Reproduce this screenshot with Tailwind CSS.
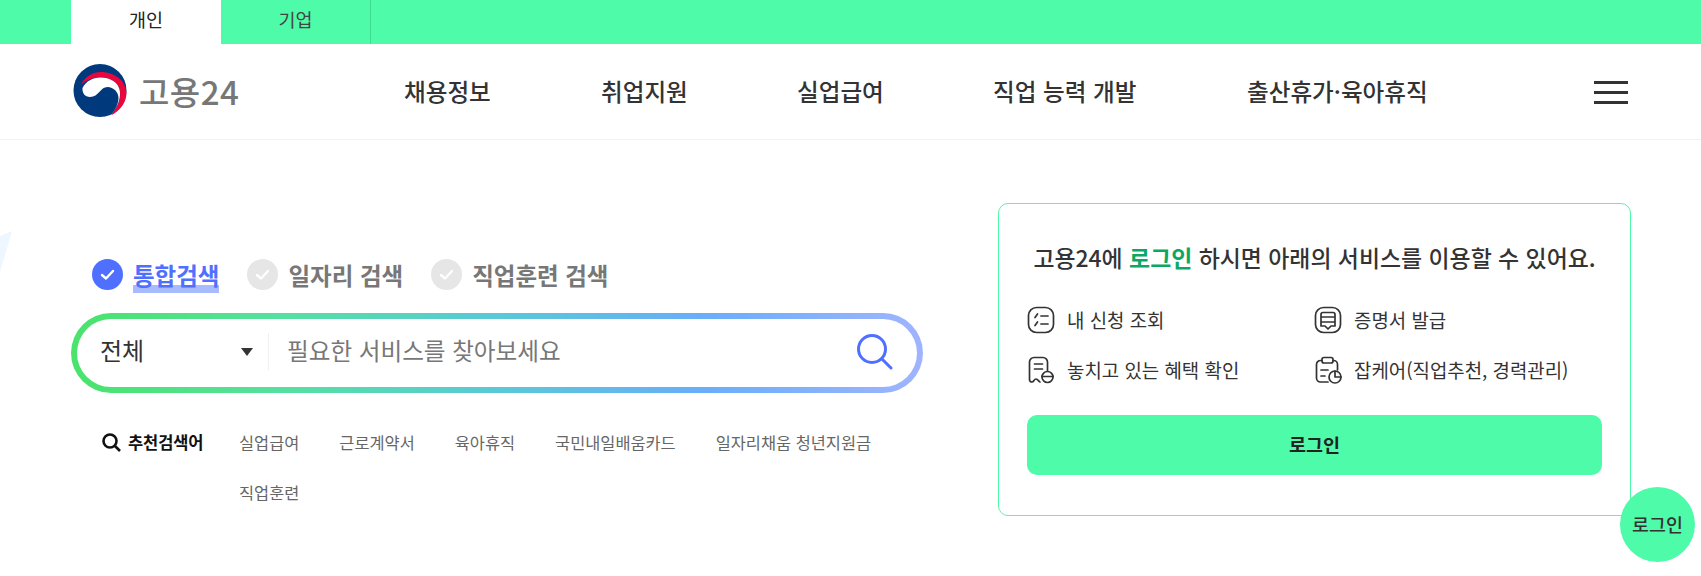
<!DOCTYPE html>
<html lang="ko">
<head>
  <meta charset="UTF-8" />
  <title>고용24</title>
  <script src="https://cdn.jsdelivr.net/npm/@tailwindcss/browser@4"></script>
</head>
<body class="relative h-[576px] overflow-hidden bg-white font-['Noto_Sans_CJK_KR','Noto_Sans',sans-serif] text-[#333]">
  <!-- top tabs -->
  <div class="flex h-[44px] bg-[#4dfba8] pl-[71px]">
    <a class="flex w-[150px] items-center justify-center bg-white pb-[4px] text-[18.5px] text-[#222]">개인</a>
    <a class="flex w-[150px] items-center justify-center border-r border-[#3fdc92] pb-[4px] text-[18.5px] text-[#444]">기업</a>
  </div>

  <!-- header -->
  <header class="flex h-[96px] items-center border-b border-[#f2f2f2] pl-[73px]">
    <div class="flex w-[331px] items-center gap-[12px]">
      <svg width="54" height="54" viewBox="0 0 54 54" class="mt-[-2px]">
        <circle cx="27" cy="26.5" r="26.5" fill="#003a7d" />
        <path d="M8 21C12 12 20 8 28 8 42 8 53 17 53.5 29 53.5 38 47 47 38 51.5 44 44 48 36 47 28 46 18 37 13.5 27 13.5 20 13.5 13 16 8 21z" fill="#e8063c" />
        <path d="M9.5 24C13 17 20 13.5 27 13.5 37 13.5 46 18 47 28 47.5 36 44 44 38 51 42 46 45.5 40 45.5 34 45.5 28 40.5 23 34.5 23 27 23 26 33 17 33 12 33 9 29 9.5 24z" fill="#fff" />
      </svg>
      <span class="text-[33px] font-medium leading-none tracking-[0.5px] text-[#777]">고용24</span>
    </div>
    <nav class="flex items-center text-[23.6px] font-medium text-[#333]">
      <a class="w-[197px]">채용정보</a>
      <a class="w-[196px]">취업지원</a>
      <a class="w-[196px]">실업급여</a>
      <a class="w-[254px]">직업 능력 개발</a>
      <a>출산휴가·육아휴직</a>
    </nav>
    <button class="absolute left-[1594px] top-[81px] flex w-[34px] flex-col gap-[7px]">
      <span class="h-[3px] bg-[#333]"></span>
      <span class="h-[3px] bg-[#333]"></span>
      <span class="h-[3px] bg-[#333]"></span>
    </button>
  </header>

  <!-- faint shape at left edge -->
  <svg class="absolute left-0 top-[228px]" width="14" height="44" viewBox="0 0 14 44"><path d="M12 3L0 8v36z" fill="#eef6ff" /></svg>

  <main class="flex items-start pl-[71px] pt-[63px]">
    <!-- search -->
    <section class="w-[927px] pt-[56px]">
      <div class="flex h-[31px] items-center pl-[21px] text-[23.5px] font-bold text-[#777]">
        <span class="flex h-[31px] w-[31px] items-center justify-center rounded-full bg-[#4f6fff]">
          <svg width="17" height="17" viewBox="0 0 17 17" fill="none" stroke="#fff" stroke-width="2.4" stroke-linecap="round" stroke-linejoin="round"><path d="M3 9l4 3.5L14 5" /></svg>
        </span>
        <span class="ml-[10px] mt-[3px] h-[34px] bg-[linear-gradient(transparent_76%,#a9bbff_76%)] leading-[33px] text-[#4f6fff]">통합검색</span>
        <span class="ml-[28px] flex h-[31px] w-[31px] items-center justify-center rounded-full bg-[#e6e6e6]">
          <svg width="17" height="17" viewBox="0 0 17 17" fill="none" stroke="#fff" stroke-width="2.4" stroke-linecap="round" stroke-linejoin="round"><path d="M3 9l4 3.5L14 5" /></svg>
        </span>
        <span class="ml-[10px] mt-[3px] h-[34px] leading-[33px]">일자리 검색</span>
        <span class="ml-[28px] flex h-[31px] w-[31px] items-center justify-center rounded-full bg-[#e6e6e6]">
          <svg width="17" height="17" viewBox="0 0 17 17" fill="none" stroke="#fff" stroke-width="2.4" stroke-linecap="round" stroke-linejoin="round"><path d="M3 9l4 3.5L14 5" /></svg>
        </span>
        <span class="ml-[10px] mt-[3px] h-[34px] leading-[33px]">직업훈련 검색</span>
      </div>

      <div class="mt-[23px] h-[80px] w-[852px] rounded-full bg-[linear-gradient(90deg,#4ae36c_0%,#55e0a0_25%,#5ac8d8_50%,#68aef8_74%,#a0b4ff_100%)] p-[6px]">
        <div class="flex h-full items-center rounded-full bg-white">
          <div class="mb-[3px] flex h-[37px] w-[192px] items-center border-r border-[#f0f0f0] pl-[23px]">
            <span class="mb-[3px] w-[141px] text-[24px] leading-none text-[#333]">전체</span>
            <svg width="12" height="8" viewBox="0 0 12 8"><path d="M0 0h12L6 8z" fill="#333" /></svg>
          </div>
          <span class="mb-[4px] ml-[18px] text-[23.6px] text-[#777]">필요한 서비스를 찾아보세요</span>
          <svg class="mb-[2px] ml-auto mr-[23px]" width="38" height="36" viewBox="0 0 38 36" fill="none" stroke="#4f6fff" stroke-width="3"><circle cx="16" cy="15" r="13.5" /><path d="M26 25l9 9" stroke-linecap="round" /></svg>
        </div>
      </div>

      <div class="mt-[33px] flex pl-[31px]">
        <div class="flex h-[32px] w-[137px] shrink-0 items-center gap-[7px]">
          <svg width="19" height="19" viewBox="0 0 19 19" fill="none" stroke="#111" stroke-width="2.6"><circle cx="8" cy="8" r="6.5" /><path d="M13 13l5 5" /></svg>
          <span class="text-[16.5px] font-bold tracking-[-0.1px] text-[#111]">추천검색어</span>
        </div>
        <div class="flex w-[660px] flex-wrap gap-x-[40px] gap-y-[18px] text-[16.4px] leading-[32px] text-[#666]">
          <a>실업급여</a>
          <a>근로계약서</a>
          <a>육아휴직</a>
          <a>국민내일배움카드</a>
          <a>일자리채움 청년지원금</a>
          <a>직업훈련</a>
        </div>
      </div>
    </section>

    <!-- login card -->
    <aside class="h-[313px] w-[633px] rounded-[10px] border border-[#4dfba8] px-[28px] pt-[37px]">
      <p class="whitespace-nowrap text-center text-[22.9px] font-medium leading-[32px] text-[#333]">고용24에 <b class="font-bold text-[#0ba864]">로그인</b> 하시면 아래의 서비스를 이용할 수 있어요.</p>
      <ul class="mt-[33px] grid grid-cols-[287px_1fr] gap-y-[22px] text-[18.9px] text-[#333]">
        <li class="flex h-[28px] items-center gap-[12px]">
          <svg width="28" height="28" viewBox="0 0 28 28" fill="none" stroke="#333" stroke-width="1.7" stroke-linecap="round" stroke-linejoin="round"><rect x="1.5" y="1.5" width="25" height="25" rx="8" /><path d="M8 11.5L10.5 8M8 19.5L10.5 16M14 10h7M14 18h7" /></svg>
          내 신청 조회
        </li>
        <li class="flex h-[28px] items-center gap-[12px]">
          <svg width="28" height="28" viewBox="0 0 28 28" fill="none" stroke="#333" stroke-width="1.7" stroke-linecap="round" stroke-linejoin="round"><rect x="1.5" y="1.5" width="25" height="25" rx="8" /><path d="M7 20V8.5a2 2 0 0 1 2-2h10a2 2 0 0 1 2 2V20h-4l-3 3-3-3zM7 11h14M7 16h14" /></svg>
          증명서 발급
        </li>
        <li class="flex h-[28px] items-center gap-[12px]">
          <svg width="28" height="28" viewBox="0 0 28 28" fill="none" stroke="#333" stroke-width="1.7" stroke-linecap="round" stroke-linejoin="round"><path d="M13 26c-1 0-2-3-4-3s-2 3-4 3c-1.5 0-2.5-1-2.5-2.5V6A4.5 4.5 0 0 1 7 1.5h9A4.5 4.5 0 0 1 20.5 6v9M7.5 8h8M7.5 13h8" /><circle cx="20.5" cy="21" r="5.5" /><path d="M15 20.5h11" /></svg>
          놓치고 있는 혜택 확인
        </li>
        <li class="flex h-[28px] items-center gap-[12px]">
          <svg width="28" height="28" viewBox="0 0 28 28" fill="none" stroke="#333" stroke-width="1.7" stroke-linecap="round" stroke-linejoin="round"><path d="M8 4.5H6.5a4 4 0 0 0-4 4v13.5a4 4 0 0 0 4 4H14M19 4.5h.5a4 4 0 0 1 4 4V14" /><rect x="8" y="1.5" width="11" height="5.5" rx="2" /><path d="M7 14h7M7 20h4" /><circle cx="21" cy="21" r="6" /><path d="M21 15v6h6" /></svg>
          잡케어(직업추천, 경력관리)
        </li>
      </ul>
      <button class="mt-[31px] h-[60px] w-full rounded-[10px] bg-[#4dfba8] text-[18.5px] font-bold text-[#222]">로그인</button>
    </aside>
  </main>

  <!-- floating login -->
  <a class="absolute left-[1620px] top-[487px] flex h-[75px] w-[75px] items-center justify-center rounded-full bg-[#4dfba8] text-[18.4px] font-medium text-[#333]">로그인</a>
</body>
</html>
